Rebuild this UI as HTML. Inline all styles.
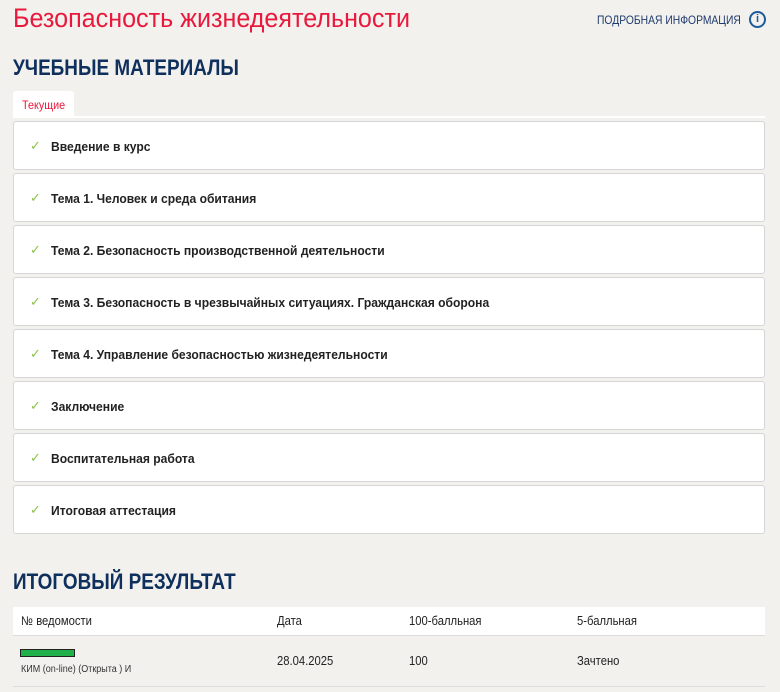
<!DOCTYPE html>
<html><head><meta charset="utf-8"><style>
*{margin:0;padding:0;box-sizing:border-box}
body{width:780px;height:692px;background:#f2f1ee;font-family:"Liberation Sans",sans-serif;color:#222;position:relative;overflow:hidden}
.a{position:absolute;white-space:nowrap}
.s{display:inline-block;transform-origin:0 50%}
h1{position:absolute;left:13px;top:3px;font-size:27px;font-weight:normal;color:#e8193c;white-space:nowrap}
.info{left:597px;top:13px;font-size:12px;color:#1f3a6b}
.ic{left:749px;top:11px;width:17px;height:17px;border:2px solid #1f5a9c;border-radius:50%;color:#1f5a9c;font-size:11px;font-weight:bold;text-align:center;line-height:13px;background:#f2f1ee}
h2{position:absolute;left:13px;font-size:22px;font-weight:bold;color:#0f2f5c;white-space:nowrap}
.tab{left:13px;top:91px;width:61px;height:27px;background:#fff;border-radius:3px 3px 0 0;color:#e8193c;font-size:12px;padding:7px 0 0 9px}
.line{left:13px;top:116px;width:752px;height:2px;background:#fff}
.card{position:absolute;left:13px;width:752px;height:49px;background:#fff;border:1px solid #d6d6d6;border-radius:3px;font-size:13px;font-weight:bold;padding:17px 0 0 37px;color:#222;white-space:nowrap}
.card span{display:inline-block;transform:scaleX(0.93);transform-origin:0 50%}
.card:before{content:"✓";position:absolute;left:16px;top:16px;color:#8bc34a;font-size:13px;font-weight:normal}
.tbl{left:13px;top:607px;width:752px;height:29px;background:#fff;border-bottom:1px solid #ddd}
.c{font-size:12.5px;color:#222}
.c span{display:inline-block;transform:scaleX(0.9);transform-origin:0 50%}
</style></head><body>
<h1><span class="s" style="transform:scaleX(0.93)">Безопасность жизнедеятельности</span></h1>
<div class="a info"><span class="s" style="transform:scaleX(0.86)">ПОДРОБНАЯ ИНФОРМАЦИЯ</span></div>
<div class="a ic">i</div>
<h2 style="top:55px"><span class="s" style="transform:scaleX(0.86)">УЧЕБНЫЕ МАТЕРИАЛЫ</span></h2>
<div class="a tab"><span class="s" style="transform:scaleX(0.9)">Текущие</span></div>
<div class="a line"></div>
<div class="card" style="top:121px"><span>Введение в курс</span></div>
<div class="card" style="top:173px"><span>Тема 1. Человек и среда обитания</span></div>
<div class="card" style="top:225px"><span>Тема 2. Безопасность производственной деятельности</span></div>
<div class="card" style="top:277px"><span>Тема 3. Безопасность в чрезвычайных ситуациях. Гражданская оборона</span></div>
<div class="card" style="top:329px"><span>Тема 4. Управление безопасностью жизнедеятельности</span></div>
<div class="card" style="top:381px"><span>Заключение</span></div>
<div class="card" style="top:433px"><span>Воспитательная работа</span></div>
<div class="card" style="top:485px"><span>Итоговая аттестация</span></div>
<h2 style="top:569px"><span class="s" style="transform:scaleX(0.86)">ИТОГОВЫЙ РЕЗУЛЬТАТ</span></h2>
<div class="a tbl"></div>
<div class="a c" style="left:21px;top:614px"><span>№ ведомости</span></div>
<div class="a c" style="left:277px;top:614px"><span>Дата</span></div>
<div class="a c" style="left:409px;top:614px"><span>100-балльная</span></div>
<div class="a c" style="left:577px;top:614px"><span>5-балльная</span></div>
<div class="a" style="left:20px;top:649px;width:55px;height:8px;background:#22b04b;border:1px solid #222"></div>
<div class="a" style="left:21px;top:664px;font-size:10px;color:#333"><span class="s" style="transform:scaleX(0.9)">КИМ (on-line) (Открыта ) И</span></div>
<div class="a c" style="left:277px;top:654px"><span>28.04.2025</span></div>
<div class="a c" style="left:409px;top:654px"><span>100</span></div>
<div class="a c" style="left:577px;top:654px"><span>Зачтено</span></div>
<div class="a" style="left:13px;top:686px;width:752px;height:1px;background:#ddd"></div>
</body></html>
